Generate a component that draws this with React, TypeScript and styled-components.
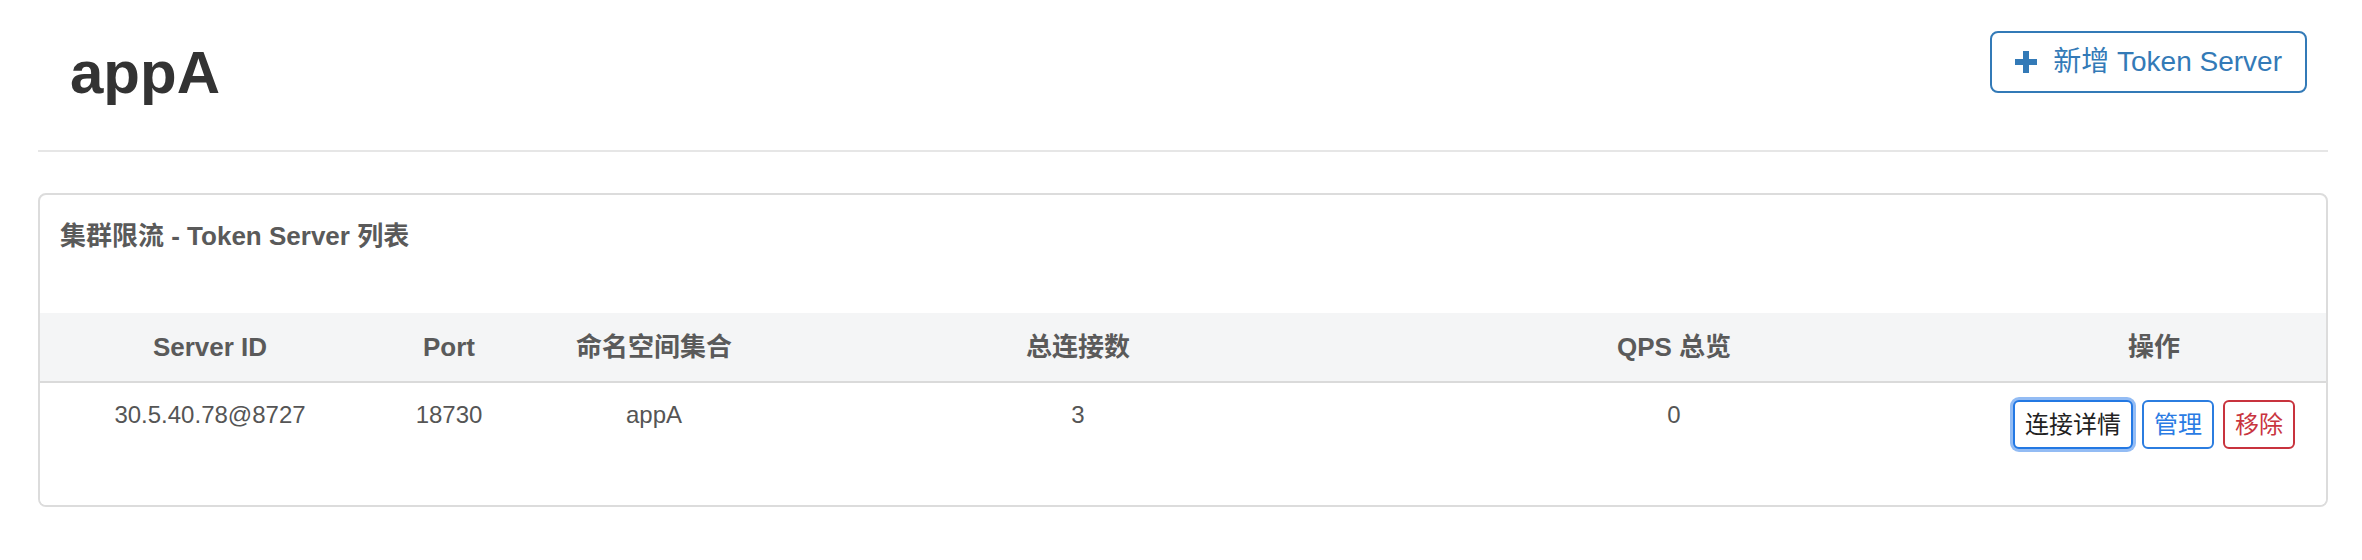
import styled, { createGlobalStyle } from 'styled-components';

const GlobalStyle = createGlobalStyle`
  html, body {
    margin: 0;
    padding: 0;
    background: #fff;
  }
  body {
    font-family: "Liberation Sans", "Noto Sans CJK SC", Arial, sans-serif;
  }
  * {
    box-sizing: border-box;
  }
`;

interface ServerRow {
  id: string;
  port: number;
  namespaces: string;
  connections: number;
  qps: number;
}

const SERVERS: ServerRow[] = [
  { id: '30.5.40.78@8727', port: 18730, namespaces: 'appA', connections: 3, qps: 0 },
];

const COLUMNS = ['Server ID', 'Port', '命名空间集合', '总连接数', 'QPS 总览', '操作'];

const Page = styled.div`
  padding: 31px 34px 0 38px;
`;

const Header = styled.div`
  display: flex;
  justify-content: space-between;
  align-items: flex-start;
  padding-bottom: 44px;
  border-bottom: 2px solid #e6e6e6;
`;

const Title = styled.h1`
  margin: 9px 0 0 32px;
  font-size: 60px;
  line-height: 66px;
  font-weight: bold;
  color: #333;
`;

const AddButton = styled.button`
  display: flex;
  align-items: center;
  gap: 16px;
  margin-right: 21px;
  height: 62px;
  padding: 0 23px;
  background: #fff;
  border: 2px solid #337ab7;
  border-radius: 8px;
  color: #337ab7;
  font-family: inherit;
  font-size: 28px;
  line-height: 42px;
  cursor: pointer;
`;

const Card = styled.div`
  margin-top: 41px;
  border: 2px solid #dcdcdc;
  border-radius: 8px;
  overflow: hidden;
`;

const CardTitle = styled.div`
  padding: 23px 20px 0;
  height: 118px;
  font-size: 26px;
  line-height: 36px;
  font-weight: bold;
  color: #5a5a5a;
`;

const Row = styled.div<{ $head?: boolean }>`
  display: grid;
  grid-template-columns: 340px 138px 272px 576px 616px 1fr;
  background: ${({ $head }) => ($head ? '#f4f5f6' : '#fff')};
  border-bottom: ${({ $head }) => ($head ? '2px solid #dadada' : 'none')};
  height: ${({ $head }) => ($head ? '70px' : '122px')};
  align-items: ${({ $head }) => ($head ? 'center' : 'start')};
`;

const HeadCell = styled.div`
  text-align: center;
  font-size: 26px;
  line-height: 36px;
  font-weight: bold;
  color: #5a5a5a;
`;

const Cell = styled.div`
  padding-top: 14px;
  text-align: center;
  font-size: 24px;
  line-height: 36px;
  color: #555;
`;

const Actions = styled.div`
  display: flex;
  justify-content: center;
  gap: 9px;
  padding-top: 17px;
`;

const ActionButton = styled.button<{ $color: string; $text: string; $focused?: boolean }>`
  height: 49px;
  padding: 0 10px;
  background: #fff;
  border: 2px solid ${({ $color }) => $color};
  border-radius: 6px;
  color: ${({ $text }) => $text};
  font-family: inherit;
  font-size: 24px;
  line-height: 45px;
  cursor: pointer;
  box-shadow: ${({ $focused }) => ($focused ? '0 0 0 3px #93bcf4' : 'none')};
`;

const PlusIcon = () => (
  <svg width="22" height="22" viewBox="0 0 22 22" fill="#337ab7">
    <path d="M8 0h6v8h8v6h-8v8h-6v-8h-8v-6h8z" />
  </svg>
);

export default function App() {
  return (
    <>
      <GlobalStyle />
      <Page>
        <Header>
          <Title>appA</Title>
          <AddButton>
            <PlusIcon />
            新增 Token Server
          </AddButton>
        </Header>

        <Card>
          <CardTitle>集群限流 - Token Server 列表</CardTitle>
          <Row $head>
            {COLUMNS.map((c) => (
              <HeadCell key={c}>{c}</HeadCell>
            ))}
          </Row>
          {SERVERS.map((s) => (
            <Row key={s.id}>
              <Cell>{s.id}</Cell>
              <Cell>{s.port}</Cell>
              <Cell>{s.namespaces}</Cell>
              <Cell>{s.connections}</Cell>
              <Cell>{s.qps}</Cell>
              <Actions>
                <ActionButton $color="#2378e3" $text="#222" $focused>连接详情</ActionButton>
                <ActionButton $color="#2b7de0" $text="#2a7be4">管理</ActionButton>
                <ActionButton $color="#c8333d" $text="#c9353f">移除</ActionButton>
              </Actions>
            </Row>
          ))}
        </Card>
      </Page>
    </>
  );
}
